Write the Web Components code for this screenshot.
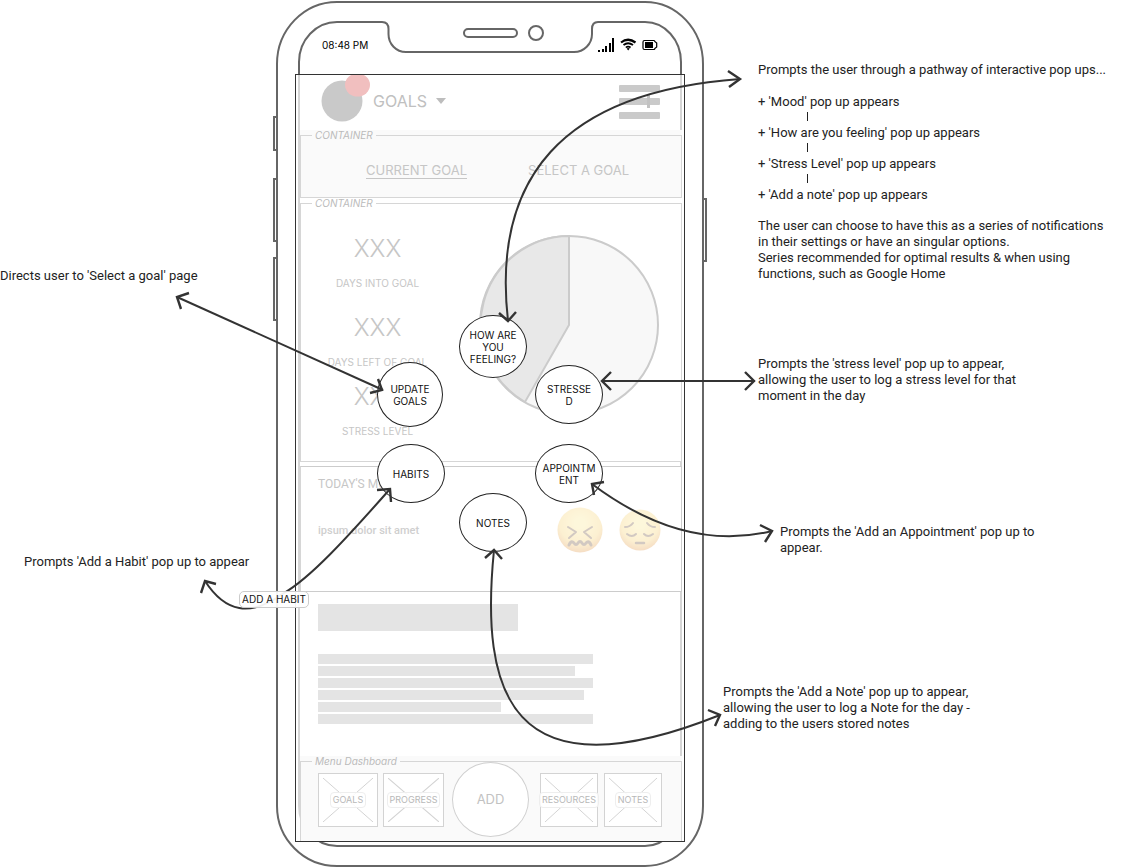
<!DOCTYPE html>
<html lang="en">
<head>
<meta charset="utf-8">
<title>Goals – add menu user flow</title>
<style>
body{margin:0;background:#fff;color:#222;font-family:Roboto,"Liberation Sans",sans-serif;font-size:13px;line-height:16px;--display:Inter,"Liberation Sans",sans-serif}
</style>
</head>
<body>
<wire-board>
  <wire-note slot="left" style="--top:268px">Directs user to 'Select a goal' page</wire-note>
  <wire-note slot="left" style="--top:270px;--left:24px">Prompts 'Add a Habit' pop up to appear</wire-note>

  <phone-frame slot="phone">
    <goals-screen></goals-screen>
    <radial-option slot="options" style="--x:186px;--y:315px;--w:68px;--h:63px">HOW ARE<br>YOU<br>FEELING?</radial-option>
    <radial-option slot="options" style="--x:104px;--y:362px;--w:66px;--h:65px">UPDATE<br>GOALS</radial-option>
    <radial-option slot="options" style="--x:262px;--y:365px;--w:68px;--h:59px">STRESSE<br>D</radial-option>
    <radial-option slot="options" style="--x:104px;--y:444px;--w:68px;--h:59px">HABITS</radial-option>
    <radial-option slot="options" style="--x:262px;--y:444px;--w:68px;--h:59px">APPOINTM<br>ENT</radial-option>
    <radial-option slot="options" style="--x:186px;--y:493px;--w:68px;--h:59px">NOTES</radial-option>
  </phone-frame>

  <wire-note slot="right" style="--top:62px;--left:50px">
    Prompts the user through a pathway of interactive pop ups...
    <note-steps></note-steps>
    The user can choose to have this as a series of notifications<br>in their settings or have an singular options.<br>Series recommended for optimal results &amp; when using<br>functions, such as Google Home
  </wire-note>
  <wire-note slot="right" style="--top:74px;--left:50px">Prompts the 'stress level' pop up to appear,<br>allowing the user to log a stress level for that<br>moment in the day</wire-note>
  <wire-note slot="right" style="--top:120px;--left:72px">Prompts the 'Add an Appointment' pop up to<br>appear.</wire-note>
  <wire-note slot="right" style="--top:128px;--left:15px">Prompts the 'Add a Note' pop up to appear,<br>allowing the user to log a Note for the day -<br>adding to the users stored notes</wire-note>
</wire-board>

<script>
const define = (name, html) => {
  const tpl = document.createElement('template');
  tpl.innerHTML = html;
  customElements.define(name, class extends HTMLElement {
    constructor() {
      super();
      this.attachShadow({ mode: 'open' }).append(tpl.content.cloneNode(true));
    }
    connectedCallback() {
      // [data-attr] placeholders take their text from the host's attribute
      for (const el of this.shadowRoot.querySelectorAll('[data-attr]'))
        el.textContent = this.getAttribute(el.dataset.attr) || '';
    }
  });
};

define('wire-board', `
<style>
:host{display:grid;grid-template-columns:273px 435px minmax(0,1fr);position:relative;overflow:hidden}
.col{display:flex;flex-direction:column;min-width:0}
</style>
<div class="col"><slot name="left"></slot></div>
<slot name="phone"></slot>
<div class="col"><slot name="right"></slot></div>
<flow-arrows></flow-arrows>`);

define('wire-note', `
<style>
:host{display:block;margin-top:var(--top,0);padding-left:var(--left,0);white-space:nowrap}
</style>
<slot></slot>`);

define('note-steps', `
<style>
:host{display:block;padding:16px 0 15px}
ul{list-style:none;margin:0;padding:0;display:grid;row-gap:15px}
li{position:relative}
li+li::before{content:"";position:absolute;left:49px;top:-13px;width:1px;height:9px;background:#222}
</style>
<ul>
<li>+ 'Mood' pop up appears</li>
<li>+ 'How are you feeling' pop up appears</li>
<li>+ 'Stress Level' pop up appears</li>
<li>+ 'Add a note' pop up appears</li>
</ul>`);

define('flow-arrows', `
<style>
:host{position:absolute;left:0;top:0;width:800px;height:867px;pointer-events:none}
svg{display:block}
.tag{position:absolute;left:239px;top:591px;box-sizing:border-box;width:70px;height:17px;border:1px solid #ccc;border-radius:5px;background:rgba(255,255,255,.93);font-family:var(--display);font-size:10px;line-height:15px;text-align:center;color:#111}
</style>
<svg width="800" height="867" fill="none" stroke="#333" stroke-width="2">
<path d="M740 79C560 92 492 180 508 321"/>
<path d="M177 297L383 390"/>
<path d="M602 381H755"/>
<path d="M592 484Q684 553 772 531"/>
<path d="M494 550C480 690 508 800 720 715"/>
<path d="M390 489C345 540 310 578 284 593C250 618 225 612 205 581"/>
<g stroke-width="2.4">
<path d="M728 71L740 79L729 87M499 313L508 321L516 312"/>
<path d="M189 293L177 297L181 309M378 379L382 390L370 393"/>
<path d="M611 372L602 381L611 390M745 372L754 381L745 390"/>
<path d="M594 495L592 484L604 482M760 525L772 531L765 542"/>
<path d="M485 558L494 550L502 559M708 710L720 715L715 726"/>
<path d="M377 490L390 489L391 502M201 593L205 581L216 584"/>
</g>
</svg>
<div class="tag">ADD A HABIT</div>`);

define('phone-frame', `
<style>
:host{display:flex;flex-direction:column;position:relative;padding-bottom:25px}
.frame{position:absolute;left:0;top:0}
.status{position:relative;box-sizing:border-box;height:74px;padding:15px 50px 0 49px;display:flex;align-items:center;justify-content:space-between;font-family:var(--display);font-size:10px;color:#000}
.screen{position:relative;margin:0 23px 0 22px;border:1px solid #333;background:rgba(255,255,255,.73);padding:0 2px 0 4px}
</style>
<svg class="frame" width="435" height="867" viewBox="273 0 435 867" fill="none" stroke="#666" stroke-width="2">
<path d="M337 2H645A58 62 0 0 1 703 64V806A58 60 0 0 1 645 866H337A60 60 0 0 1 277 806V64A60 62 0 0 1 337 2Z" fill="#fff"/>
<path d="M337 22H382Q388.500 22 388.500 29V34C388.500 44 396 52 406 52H574C584 52 592 44 592 34V29Q592 22 598 22H645A36 40 0 0 1 681 62V806A36 40 0 0 1 645 846H337A38 40 0 0 1 299 806V62A38 40 0 0 1 337 22Z"/>
<rect x="464" y="29" width="53" height="8" rx="4"/>
<circle cx="536" cy="33" r="7"/>
<path d="M277 117H274V150H277M277 179H274V241H277M277 258H274V320H277M703 199H706V261H703"/>
</svg>
<div class="status">
<span>08:48 PM</span>
<svg width="60" height="16" viewBox="598 37 60 16" aria-label="signal, wifi, battery" role="img">
<path d="M598 50h2v2h-2zM602 49h2v3h-2zM605 46h2v6h-2zM609 43h2v9h-2zM612 38h2v14h-2z"/>
<g fill="none" stroke="#000"><path d="M621 42.500Q628 37 635.500 42.500" stroke-width="2.200"/><path d="M623.500 45Q628 41.500 633 45" stroke-width="1.800"/><path d="M625.800 47.500Q628 45.700 630.600 47.500" stroke-width="1.600"/></g>
<path d="M626.600 48.600Q628.200 47.600 629.800 48.600L628.200 50.400Z"/>
<path d="M644.500 40.500h9.500q.8 0 .8 1l1.900 1.500v4l-1.900 1.500q0 1-.8 1h-9.500q-1.500 0-1.500-1.500v-6q0-1.500 1.500-1.500z" fill="#fff" stroke="#000" stroke-width="1.200"/><path d="M645 42h8v6h-8z"/>
</svg>
</div>
<div class="screen"><slot></slot></div>
<slot name="options"></slot>`);

define('radial-option', `
<style>
:host{position:absolute;left:var(--x);top:var(--y);width:var(--w);height:var(--h)}
button{width:100%;height:100%;margin:0;padding:0;border:1px solid #222;border-radius:50%;background:#fff;font-family:var(--display);font-size:10px;line-height:12px;color:#111;white-space:nowrap}
</style>
<button type="button"><slot></slot></button>`);

define('goals-screen', `
<style>
:host{display:flex;flex-direction:column;color:#c6c6c6}
wire-container.shaded{--fill:#fafafa}
.tabs{display:flex;gap:61px;align-items:center;height:53px;padding:3px 0 0 65px;font-family:var(--display)}
.tabs a{color:inherit;text-decoration:none;font-size:13px;border-bottom:1px solid transparent}
.tabs a.on{border-bottom-color:#c6c6c6}
.summary{display:flex;align-items:flex-start;gap:24px;height:252px}
.stats{width:153px;padding-top:24px;display:grid;row-gap:22px}
.stats :last-child{margin-top:-10px}
svg.pie{margin-top:25px}
</style>
<goals-header></goals-header>
<wire-container class="shaded" label="CONTAINER">
<nav class="tabs"><a class="on" href="#current">CURRENT GOAL</a><a href="#select">SELECT A GOAL</a></nav>
</wire-container>
<wire-container label="CONTAINER">
<div class="summary">
<div class="stats">
<goal-stat value="XXX" label="DAYS INTO GOAL"></goal-stat>
<goal-stat value="XXX" label="DAYS LEFT OF GOAL"></goal-stat>
<goal-stat value="XXX" label="STRESS LEVEL"></goal-stat>
</div>
<svg class="pie" width="182" height="182" viewBox="-91 -91 182 182" stroke="#cbcbcb" stroke-width="2" role="img" aria-label="Goal progress">
<circle r="89" fill="#f8f8f8"/><path d="M0 -89V0L-44 77A89 89 0 0 1 0 -89Z" fill="#e8e8e8"/>
</svg>
</div>
</wire-container>
<mood-panel></mood-panel>
<text-skeleton></text-skeleton>
<menu-dashboard></menu-dashboard>`);

define('goals-header', `
<style>
:host{display:flex;align-items:flex-start;height:55px;padding:0 22px 0 21px}
button{display:flex;align-items:center;gap:9px;margin:14px 0 0 2px;padding:0;border:0;background:none;font-family:var(--display);font-size:16px;line-height:24px;color:#c0c0c0}
.menu{margin:9px 0 0 auto}
</style>
<svg width="50" height="48" viewBox="321 75 50 48" role="img" aria-label="Profile, new notifications">
<circle cx="342" cy="101" r="20.500" fill="#c9c9c9"/><ellipse cx="357.500" cy="85" rx="12.500" ry="11.500" fill="#f1bfbf"/>
</svg>
<button type="button">GOALS<svg width="10" height="6"><path d="M0 0H10L5 6Z" fill="#bdbdbd"/></svg></button>
<button class="menu" type="button" aria-label="Menu"><svg width="41" height="36" fill="#cacaca"><rect y="1" width="41" height="7" rx="1"/><rect y="14" width="41" height="7" rx="1"/><rect y="28" width="41" height="7" rx="1"/><path d="M28 11h3v13h-3z" fill="#c2c2c2"/></svg></button>`);

define('wire-container', `
<style>
:host{display:block;background:var(--fill,#fff)}
fieldset{margin:0;padding:0;border:1px solid #d6d6d6;border-bottom-width:var(--bottom,1px);min-width:0}
legend{margin-left:11px;padding:0 3px;font-family:var(--display);font-size:10px;line-height:11px;height:11px;font-style:italic;color:#bbb}
</style>
<fieldset><legend data-attr="label"></legend><slot></slot></fieldset>`);

define('goal-stat', `
<style>
:host{display:grid;justify-items:center;row-gap:11px;font-family:var(--display)}
b{font-size:24px;line-height:32px;font-weight:300}
span{font-size:10px;line-height:14px;white-space:nowrap}
</style>
<b data-attr="value"></b><span data-attr="label"></span>`);

define('mood-panel', `
<style>
:host{display:flex;justify-content:space-between;align-items:flex-start;box-sizing:border-box;height:126px;margin-top:4px;padding:9px 20px 0 17px;border:1px solid #ccc;border-left-color:#d6d6d6;background:#fff}
h2{margin:0;font-size:12px;line-height:16px;font-weight:400}
p{margin:31px 0 0;font-size:11px;line-height:16px;font-weight:500;color:#cfcfcf}
.faces{display:flex;align-items:center;gap:16px;margin-top:31px;opacity:.27}
</style>
<div><h2>TODAY'S MOOD</h2><p>ipsum dolor sit amet</p></div>
<div class="faces">
<svg width="46" height="46" viewBox="0 0 46 46" role="img" aria-label="Confounded"><defs><radialGradient id="g" cy=".35" r=".65"><stop offset=".2" stop-color="#fbe27c"/><stop offset=".7" stop-color="#f6c95a"/><stop offset="1" stop-color="#dd8628"/></radialGradient></defs>
<circle cx="23" cy="23" r="22.500" fill="url(#g)"/><g fill="none" stroke="#5b3a22" stroke-width="2" stroke-linecap="round" stroke-linejoin="round"><path d="M11 20L19 25L12 31M35 20L27 25L34 31"/><path d="M12 38Q14 33 17 36Q19 39 21 36Q23 33 25 36Q27 39 29 36Q32 33 34 38" stroke-width="3"/></g></svg>
<svg width="42" height="42" viewBox="0 0 42 42" role="img" aria-label="Pensive"><defs><radialGradient id="h" cy=".35" r=".65"><stop offset=".2" stop-color="#fbe27c"/><stop offset=".7" stop-color="#f6c95a"/><stop offset="1" stop-color="#dd8628"/></radialGradient></defs>
<circle cx="21" cy="21" r="20.500" fill="url(#h)"/><g fill="none" stroke="#5b3a22" stroke-width="2" stroke-linecap="round"><path d="M6 18Q11 18 14 14M28 14Q31 18 36 18"/><path d="M8 25Q13 29 17 25M25 25Q29 29 34 25"/><path d="M17 34H25" stroke-width="2.500"/></g></svg>
</div>`);

define('text-skeleton', `
<style>
:host{display:flex;flex-direction:column;gap:2px;box-sizing:border-box;height:164px;padding:12px 18px 0}
i{display:block;height:10px;width:275px;max-width:100%;background:#e4e4e4}
.title{width:200px;height:27px;margin-bottom:21px}
.a{width:257px}.b{width:266px}.c{width:183px}
</style>
<i class="title"></i><i></i><i class="a"></i><i></i><i class="b"></i><i class="c"></i><i></i>`);

define('menu-dashboard', `
<style>
:host{display:block}
wire-container{--fill:#fafafa;--bottom:0}
.tools{display:flex;align-items:flex-start;height:68px;padding:6px 0 0 17px;box-sizing:content-box}
.add{box-sizing:border-box;width:77px;height:75px;margin:-11px 11px 0 8px;padding:0 0 2px;border:1px solid #d0d0d0;border-radius:50%;background:#fff;font-family:var(--display);font-size:13px;color:#c2c2c2}
</style>
<wire-container label="Menu Dashboard">
<div class="tools">
<menu-tile style="--w:60px" label="GOALS"></menu-tile>
<menu-tile style="--w:61px;margin-left:5px" label="PROGRESS"></menu-tile>
<button class="add" type="button">ADD</button>
<menu-tile style="--w:58px" label="RESOURCES"></menu-tile>
<menu-tile style="--w:58px;margin-left:6px" label="NOTES"></menu-tile>
</div>
</wire-container>`);

define('menu-tile', `
<style>
:host{display:block;width:var(--w);height:54px}
button{position:relative;display:flex;align-items:center;justify-content:center;box-sizing:border-box;width:100%;height:100%;padding:0;border:1px solid #d3d3d3;background:#fff;font-family:var(--display);font-size:9px;color:#b8b8b8}
svg{position:absolute;inset:4px;width:calc(100% - 8px);height:calc(100% - 8px)}
span{position:relative;flex:none;padding:0 2px;border:1px solid #eee;border-radius:4px;background:rgba(255,255,255,.85);line-height:14px}
</style>
<button type="button"><svg viewBox="0 0 50 44" preserveAspectRatio="none" stroke="#d3d3d3" aria-hidden="true"><path d="M0 0L50 44M50 0L0 44"/></svg><span data-attr="label"></span></button>`);
</script>
</body>
</html>
